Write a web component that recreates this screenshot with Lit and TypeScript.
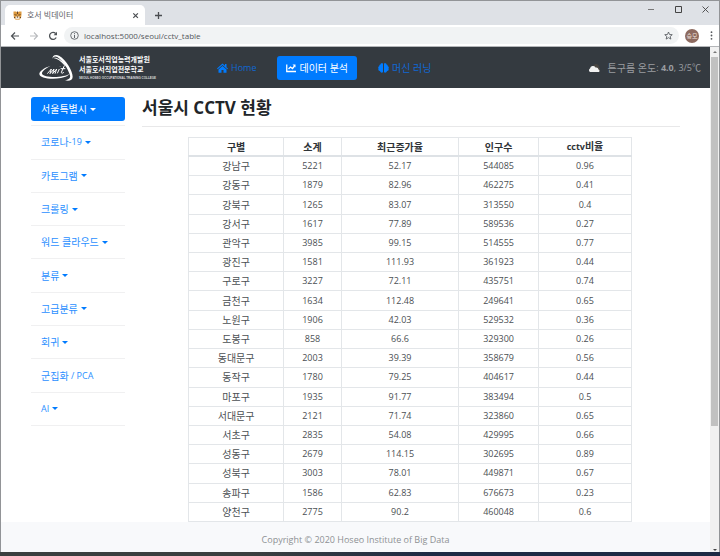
import { LitElement, html, css } from "lit";
import { customElement } from "lit/decorators.js";

const rows: [string, string, string, string, string][] = [
  ["강남구", "5221", "52.17", "544085", "0.96"],
  ["강동구", "1879", "82.96", "462275", "0.41"],
  ["강북구", "1265", "83.07", "313550", "0.4"],
  ["강서구", "1617", "77.89", "589536", "0.27"],
  ["관악구", "3985", "99.15", "514555", "0.77"],
  ["광진구", "1581", "111.93", "361923", "0.44"],
  ["구로구", "3227", "72.11", "435751", "0.74"],
  ["금천구", "1634", "112.48", "249641", "0.65"],
  ["노원구", "1906", "42.03", "529532", "0.36"],
  ["도봉구", "858", "66.6", "329300", "0.26"],
  ["동대문구", "2003", "39.39", "358679", "0.56"],
  ["동작구", "1780", "79.25", "404617", "0.44"],
  ["마포구", "1935", "91.77", "383494", "0.5"],
  ["서대문구", "2121", "71.74", "323860", "0.65"],
  ["서초구", "2835", "54.08", "429995", "0.66"],
  ["성동구", "2679", "114.15", "302695", "0.89"],
  ["성북구", "3003", "78.01", "449871", "0.67"],
  ["송파구", "1586", "62.83", "676673", "0.23"],
  ["양천구", "2775", "90.2", "460048", "0.6"],
];

const menu: { ko?: string; latin?: string; caret: boolean; active?: boolean }[] = [
  { ko: "서울특별시", caret: true, active: true },
  { ko: "코로나", latin: "-19", caret: true },
  { ko: "카토그램", caret: true },
  { ko: "크롤링", caret: true },
  { ko: "워드 클라우드", caret: true },
  { ko: "분류", caret: true },
  { ko: "고급분류", caret: true },
  { ko: "회귀", caret: true },
  { ko: "군집화", latin: " / PCA", caret: false },
  { latin: "AI", caret: true },
];

const reset = css`
  * { box-sizing: border-box; }
  button { font: inherit; color: inherit; background: none; border: 0; padding: 0; display: flex; align-items: center; justify-content: center; }
  a { color: inherit; text-decoration: none; }
  svg { display: block; flex: none; }
  .latin { font-size: 9px; white-space: pre; }
`;

@customElement("browser-chrome")
class BrowserChrome extends LitElement {
  static styles = [reset, css`
    :host { display: block; color: #3c4043; }
    .strip { display: flex; height: 24px; background: #dee1e6; padding-left: 4px; }
    .tab { display: flex; align-items: center; width: 140px; margin-top: 4px; padding: 0 5px 0 8px; gap: 5px; background: #fff; border-radius: 5px 5px 0 0; font-size: 8px; color: #5f6368; }
    .tab span { flex: 1; }
    .new { width: 26px; padding-top: 4px; }
    .win { display: flex; margin-left: auto; height: 16px; }
    .win button { width: 27px; }
    .bar { display: flex; align-items: center; height: 22px; background: #fff; padding: 0 2px 0 4px; border-bottom: 1px solid #b4b6b9; }
    .bar button { width: 19px; height: 20px; }
    .address { display: flex; align-items: center; flex: 1; height: 17px; margin: 0 6px 0 2px; padding: 0 5px 0 6px; gap: 5px; background: #f1f3f4; border-radius: 9px; }
    .address input { flex: 1; min-width: 0; border: 0; padding: 0; background: none; font: 8px/16px "Open Sans", sans-serif; color: #54585c; outline: 0; }
    .bar .star { width: 12px; }
    .bar .avatar { width: 14px; height: 14px; border-radius: 7px; background: #8d6a5f; color: #f0e4df; font-size: 6px; }
    .bar .more { width: 12px; margin-left: 6px; }
  `];
  render() {
    return html`
      <div class="strip">
        <div class="tab">
          <svg width="9" height="9" viewBox="0 0 18 18"><path d="M1 1h5l3 2 3-2h5v6l-1 7-4 4H6l-4-4-1-7z" fill="#dd9a3e"/><path d="M8 1h2v5H8zM2 7h3v1H2zM13 7h3v1h-3zM2 12h3v2H2zM13 12h3v2h-3z" fill="#6b4626"/><path d="M5 11h8v5l-2 1H7l-2-1z" fill="#eee3d4"/><path d="M5 7h2v2H5zM11 7h2v2h-2zM8 11h2v2H8z" fill="#392b22"/></svg>
          <span>호서 빅데이터</span>
          <button aria-label="Close tab"><svg width="9" height="9" viewBox="0 0 9 9" stroke="#4a4d51" stroke-width="1.2"><path d="M2.3 2.3l4.6 4.6M6.9 2.3L2.3 6.9"/></svg></button>
        </div>
        <button class="new" aria-label="New tab"><svg width="9" height="9" viewBox="0 0 9 9" stroke="#4a4d51" stroke-width="1.3"><path d="M4.5 1v7M1 4.5h7"/></svg></button>
        <div class="win">
          <button aria-label="Minimize"><svg width="7" height="7" viewBox="0 0 7 7"><path d="M0 3.5h6" stroke="#777"/></svg></button>
          <button aria-label="Maximize"><svg width="7" height="7" viewBox="0 0 7 7"><path d="M.5 .5h6v6h-6z" fill="none" stroke="#444"/></svg></button>
          <button aria-label="Close"><svg width="7" height="7" viewBox="0 0 7 7"><path d="M.5 .5l6 6M6.5 .5l-6 6" stroke="#444" stroke-width=".9"/></svg></button>
        </div>
      </div>
      <div class="bar">
        <button aria-label="Back"><svg width="10" height="10" viewBox="0 0 10 10" fill="none" stroke="#4f5357" stroke-width="1.2"><path d="M9 5H1.5M5 1.5L1.5 5 5 8.5"/></svg></button>
        <button aria-label="Forward"><svg width="10" height="10" viewBox="0 0 10 10" fill="none" stroke="#b9bbbe" stroke-width="1.1"><path d="M1 5h7.5M5 1.5L8.5 5 5 8.5"/></svg></button>
        <button aria-label="Reload"><svg width="10" height="10" viewBox="0 0 10 10" fill="none" stroke="#4f5357" stroke-width="1.3"><path d="M8.2 6.5A3.5 3.5 0 1 1 7.6 2.5"/><path d="M9 .8v3.4H5.6z" fill="#4f5357" stroke="none"/></svg></button>
        <div class="address">
          <svg width="9" height="9" viewBox="0 0 9 9"><circle cx="4.5" cy="4.5" r="3.8" fill="none" stroke="#5f6368" stroke-width=".9"/><path d="M4.5 4v3M4.5 2.2v1" stroke="#5f6368"/></svg>
          <input aria-label="Address" value="localhost:5000/seoul/cctv_table">
          <button class="star" aria-label="Bookmark"><svg width="9" height="9" viewBox="0 0 18 18"><path d="M9 2l2.1 5 5.4.4-4.1 3.5 1.3 5.3L9 13.3l-4.7 2.9 1.3-5.3L1.5 7.4 6.9 7z" fill="none" stroke="#55595d" stroke-width="1.7"/></svg></button>
        </div>
        <button class="avatar" aria-label="Profile">승모</button>
        <button class="more" aria-label="Menu"><svg width="3" height="9" viewBox="0 0 3 9" fill="#55595d"><circle cx="1.5" cy="1.2" r=".9"/><circle cx="1.5" cy="4.5" r=".9"/><circle cx="1.5" cy="7.8" r=".9"/></svg></button>
      </div>`;
  }
}

@customElement("site-header")
class SiteHeader extends LitElement {
  static styles = [reset, css`
    :host { display: flex; align-items: center; height: 41px; flex: none; background: #343a40; padding: 0 9px 0 38px; }
    .brand { display: flex; align-items: center; gap: 4px; width: 112px; color: #fff; font-weight: 700; font-size: 7px; line-height: 10px; white-space: nowrap; }
    .brand div > span { display: block; }
    .brand .sub { font: 700 3px/6px "Liberation Sans Narrow", "Liberation Sans", sans-serif; color: #ddd; }
    nav { display: flex; flex: 1; gap: 12px; padding: 0 0 0 57px; color: #1068d4; }
    nav a { display: flex; align-items: center; gap: 3px; height: 24px; padding: 0 9px; white-space: nowrap; }
    nav .on { background: #007bff; color: #fff; border-radius: 3px; }
    nav svg { color: #007bff; }
    nav .on svg { color: #fff; }
    .weather { display: flex; align-items: center; color: #9a9da0; white-space: nowrap; }
    .weather svg { margin-right: 8px; }
  `];
  render() {
    return html`
      <a class="brand" href="#">
        <svg width="36" height="28" viewBox="0 0 108 84" fill="#fff"><path d="M41 14C39 5 49 0 60 5C82 17 101 51 101 68C101 78 92 82 78 79C91 77 95 72 93 64C87 43 70 19 55 9C48 5 43 8 41 14z"/><path d="M43 12C51 9 66 15 78 32L81 37L78 36C66 21 54 14 43 12z"/><path d="M35 35C14 42 2 51 1 59C1 72 34 77 66 72C78 70 87 66 92 60C80 66 54 71 33 68C15 66 8 62 9 56C11 50 20 43 35 35z"/><path d="M25 59l12-14-4 14 12-14-4 14 12-14-5 14M61 45l-6 13M64 37l1-1M76 35l-9 20c0 4 5 3 8-1M65 44h14" fill="none" stroke="#fff" stroke-width="3"/></svg>
        <div><span>서울호서직업능력개발원</span><span>서울호서직업전문학교</span><span class="sub">SEOUL HOSEO OCCUPATIONAL TRAINING COLLEGE</span></div>
      </a>
      <nav>
        <a href="#"><svg width="11" height="10" viewBox="0 0 22 20" fill="currentColor"><path d="M11 1L0 11l1.5 1.6L11 4.2l9.5 8.4L22 11l-3-2.7V2h-3v3.6z"/><path d="M11 6l-8 7v6.5h6V14h4v5.5h6V13z"/></svg><span class="latin">Home</span></a>
        <a class="on" href="#"><svg width="10" height="10" viewBox="0 0 20 20" fill="none" stroke="currentColor" stroke-width="2.6"><path d="M1.5 3v14H20M5 12l4-4 4 3 4-5"/><path d="M13 3h6v6z" fill="currentColor" stroke="none"/></svg>데이터 분석</a>
        <a href="#"><svg width="11" height="10" viewBox="0 0 22 20" fill="currentColor"><path d="M10 1C7 0 5 1 5 3 3 3 2 5 3 6 0 7 0 10 1 11c-1 3 0 5 3 5 1 4 5 4 6 2zM12 1c3-1 5 0 5 2 2 0 3 2 2 3 3 1 3 4 2 5 1 3 0 5-3 5-1 4-5 4-6 2z"/></svg>머신 러닝</a>
      </nav>
      <div class="weather">
        <svg width="12" height="10" viewBox="0 0 24 20"><path d="M10 7a6 6 0 0 1 12 2 5 5 0 0 1 1 8H12z" fill="#484541"/><path d="M4 18a4 4 0 0 1 0-7 6 6 0 0 1 11-2 5 5 0 0 1 6 4 3 3 0 0 1 1 5z" fill="#f1f1f1"/></svg>
        튼구름 온도<span class="latin">: <b>4.0</b>, 3/5℃</span>
      </div>`;
  }
}

@customElement("side-menu")
class SideMenu extends LitElement {
  static styles = [reset, css`
    :host { display: block; width: 94px; flex: none; color: #2b8fff; }
    ul { display: grid; grid-auto-rows: 1fr; min-height: 333px; margin: 0; padding: 0; list-style: none; }
    li { display: flex; align-items: center; border-bottom: 1px solid #f0f0f1; }
    a { display: flex; align-items: center; flex: 1; height: 24px; padding: 0 10px; border-radius: 3px; white-space: nowrap; }
    .on { background: #007bff; color: #fff; }
    .caret { margin-left: 3px; border: 3px solid transparent; border-top-color: #007bff; border-bottom: 0; }
    .on .caret { border-top-color: #fff; }
  `];
  render() {
    return html`<ul>${menu.map((m) => html`<li><a href="#" class=${m.active ? "on" : ""}>${m.ko}${m.latin ? html`<span class="latin">${m.latin}</span>` : ""}${m.caret ? html`<span class="caret"></span>` : ""}</a></li>`)}</ul>`;
  }
}

@customElement("cctv-table")
class CctvTable extends LitElement {
  static styles = [reset, css`
    :host { display: block; padding: 0 48px 0 46px; }
    table { width: 100%; height: 385px; table-layout: fixed; border-collapse: collapse; text-align: center; color: #4b4f53; }
    th, td { padding: 0; line-height: 16px; border: 1px solid #e3e6e9; }
    th { color: #2f3438; border-bottom: 2px solid #dee2e6; font-weight: 700; }
    td { font-size: 9px; }
    td:first-child { font-size: 10px; }
    .w1 { width: 21.5%; } .w2 { width: 13%; } .w3 { width: 26.5%; } .w4 { width: 18%; } .w5 { width: 21%; }
  `];
  render() {
    return html`<table>
      <colgroup><col class="w1"><col class="w2"><col class="w3"><col class="w4"><col class="w5"></colgroup>
      <thead><tr><th>구별</th><th>소계</th><th>최근증가율</th><th>인구수</th><th><span class="latin">cctv</span>비율</th></tr></thead>
      <tbody>${rows.map((r) => html`<tr>${r.map((c) => html`<td>${c}</td>`)}</tr>`)}</tbody>
    </table>`;
  }
}

@customElement("app-root")
class AppRoot extends LitElement {
  static styles = [reset, css`
    :host { display: flex; flex-direction: column; height: 100vh; overflow: hidden; background: #fff; font: 10px/16px "Open Sans", "Noto Sans CJK KR", sans-serif; border-top: 1px solid #929497; box-sizing: border-box; }
    .window { display: flex; flex-direction: column; flex: 1; min-height: 0; border: solid #929497; border-width: 0 1px; }
    .view { display: flex; flex: 1; min-height: 0; }
    .page { display: flex; flex-direction: column; flex: 1; min-width: 0; }
    .body { display: flex; flex: 1; min-height: 0; overflow: hidden; gap: 17px; padding: 5px 30px 0 30px; }
    main { flex: 1; min-width: 0; }
    h1 { margin: 0 0 10px; padding-bottom: 4px; border-bottom: 1px solid #e8e8e9; font-size: 17px; line-height: 29px; font-weight: 700; color: #212529; }
    footer { flex: none; padding: 10px 0 4px; background: #f8f9fb; text-align: center; font-size: 9px; color: #8e9194; }
    .scroll { display: flex; flex-direction: column; align-items: center; width: 9px; background: #f1f1f1; }
    .up, .down { border: 2px solid transparent; }
    .up { margin: 4px 0; border-top: 0; border-bottom-color: #777; }
    .down { margin: auto 0 1px; border-bottom: 0; border-top-color: #444; }
    .thumb { width: 7px; height: 73%; background: #c1c1c1; }
    .taskbar { height: 4px; flex: none; background: linear-gradient(90deg, #3a3f3f 35%, #1d2a44 60%); }
  `];
  render() {
    return html`
      <div class="window">
        <browser-chrome></browser-chrome>
        <div class="view">
          <div class="page">
            <site-header></site-header>
            <div class="body">
              <side-menu></side-menu>
              <main>
                <h1>서울시 CCTV 현황</h1>
                <cctv-table></cctv-table>
              </main>
            </div>
            <footer>Copyright © 2020 Hoseo Institute of Big Data</footer>
          </div>
          <div class="scroll"><span class="up"></span><span class="thumb"></span><span class="down"></span></div>
        </div>
      </div>
      <div class="taskbar"></div>`;
  }
}
